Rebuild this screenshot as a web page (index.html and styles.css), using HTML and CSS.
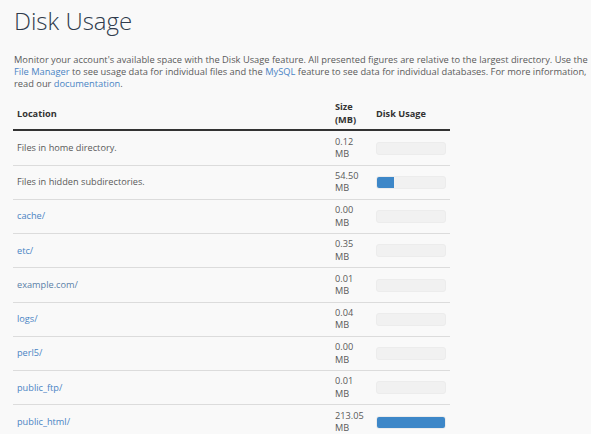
FILE: index.html
```html
<!DOCTYPE html>
<html>
<head>
<meta charset="utf-8">
<link rel="stylesheet" href="styles.css">
</head>
<body>
<div class="page">
  <h1 class="title">Disk Usage</h1>
  <p class="intro">Monitor your account's available space with the Disk Usage feature. All presented figures are relative to the largest directory. Use the <a href="#">File Manager</a> to see usage data for individual files and the <a href="#">MySQL</a> feature to see data for individual databases. For more information, read our <a href="#">documentation</a>.</p>
  <table class="usage">
    <thead>
      <tr><th class="c-loc">Location</th><th class="c-size">Size<br>(MB)</th><th class="c-bar">Disk Usage</th></tr>
    </thead>
    <tbody>
      <tr><td>Files in home directory.</td><td class="size">0.12<br>MB</td><td><div class="bar"><div class="fill" style="width:0%"></div></div></td></tr>
      <tr><td>Files in hidden subdirectories.</td><td class="size">54.50<br>MB</td><td><div class="bar"><div class="fill" style="width:25.6%"></div></div></td></tr>
      <tr><td><a href="#">cache/</a></td><td class="size">0.00<br>MB</td><td><div class="bar"><div class="fill" style="width:0%"></div></div></td></tr>
      <tr><td><a href="#">etc/</a></td><td class="size">0.35<br>MB</td><td><div class="bar"><div class="fill" style="width:0%"></div></div></td></tr>
      <tr><td><a href="#" class="plain">example.com/</a></td><td class="size">0.01<br>MB</td><td><div class="bar"><div class="fill" style="width:0%"></div></div></td></tr>
      <tr><td><a href="#">logs/</a></td><td class="size">0.04<br>MB</td><td><div class="bar"><div class="fill" style="width:0%"></div></div></td></tr>
      <tr><td><a href="#">perl5/</a></td><td class="size">0.00<br>MB</td><td><div class="bar"><div class="fill" style="width:0%"></div></div></td></tr>
      <tr><td><a href="#">public_ftp/</a></td><td class="size">0.01<br>MB</td><td><div class="bar"><div class="fill" style="width:0%"></div></div></td></tr>
      <tr><td><a href="#">public_html/</a></td><td class="size">213.05<br>MB</td><td><div class="bar"><div class="fill" style="width:100%"></div></div></td></tr>
    </tbody>
  </table>
</div>
</body>
</html>
```
FILE: styles.css
```css
html, body {
  margin: 0;
  padding: 0;
  background: #f9f9f9;
}
body {
  font-family: "Open Sans", "DejaVu Sans", sans-serif;
  color: #595959;
  overflow: hidden;
}
.page {
  padding: 0 0 0 13px;
}
a {
  color: #4a84c4;
  text-decoration: none;
}
a.plain {
  color: #5a7fa8;
}
.title {
  margin: 0;
  padding: 4px 0 0 1px;
  font-size: 24px;
  font-weight: 300;
  line-height: 34px;
  color: #2f3b4c;
}
.intro {
  margin: 16px 0 0 1px;
  font-size: 9.3px;
  line-height: 11.8px;
  width: 580px;
}
.usage {
  margin-top: 8px;
  width: 437px;
  border-collapse: collapse;
  font-size: 9.2px;
}
.usage th {
  text-align: left;
  font-weight: 700;
  color: #333;
  border-bottom: 2px solid #333;
  padding: 4px 4px 3px 4px;
  line-height: 12.5px;
}
.usage td {
  padding: 4px 4px;
  line-height: 12.5px;
  border-bottom: 1px solid #dcdcdc;
  height: 25.25px;
  vertical-align: middle;
}
.c-loc { width: auto; }
.c-size { width: 33px; }
.c-bar { width: 70px; padding-right: 4px; }
.bar {
  width: 70px;
  height: 13px;
  background: #f1f1f1;
  border: 1px solid #ececec;
  border-radius: 3px;
  box-sizing: border-box;
  overflow: hidden;
}
.fill {
  height: 100%;
  background: #3d87c8;
}
```
